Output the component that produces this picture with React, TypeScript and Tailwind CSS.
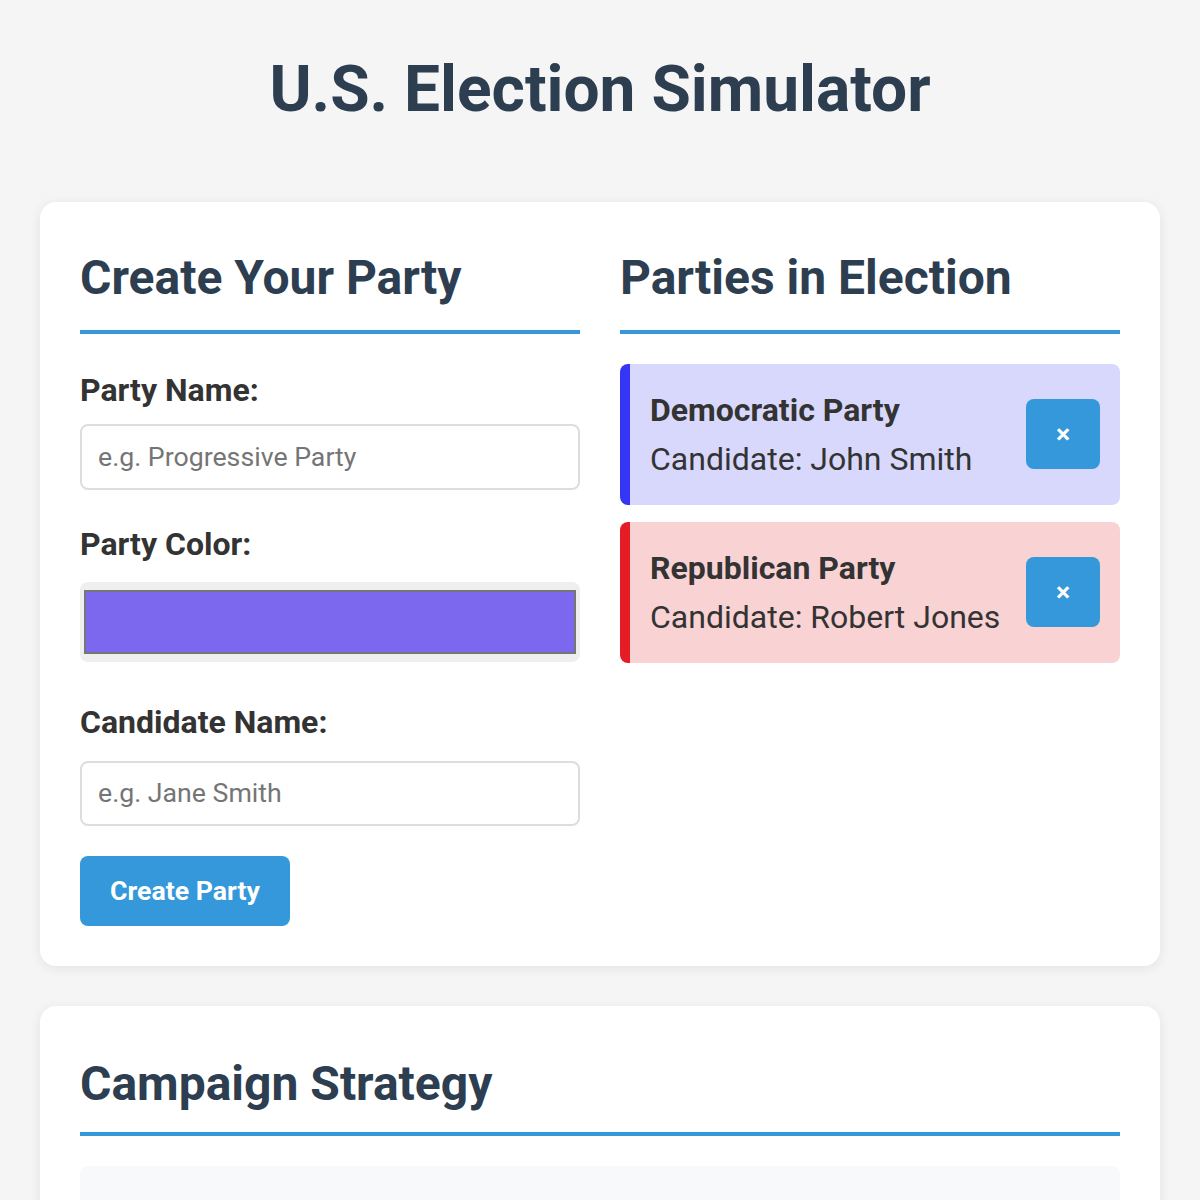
import React from "react";

const parties = [
  { name: "Democratic Party", candidate: "John Smith", bar: "border-[#3535f5]", bg: "bg-[#d8d8fc]" },
  { name: "Republican Party", candidate: "Robert Jones", bar: "border-[#e31c25]", bg: "bg-[#f9d2d4]" },
];

export default function App() {
  return (
    <div
      className="min-h-screen bg-[#f5f5f5] px-10 pt-[52px] pb-10"
      style={{ fontFamily: "Roboto, 'Liberation Sans', sans-serif" }}
    >
      <h1 className="mb-[73px] text-center text-[64px] font-bold leading-[1.2] text-[#2c3e50]">
        U.S. Election Simulator
      </h1>

      <div className="rounded-2xl bg-white p-10 shadow-[0_2px_12px_rgba(0,0,0,0.08)]">
        <div className="grid grid-cols-2 gap-10">
          <div className="flex flex-col items-start">
            <h2 className="mb-8 w-full border-b-4 border-[#3498db] pb-4 text-[48px] font-bold leading-[1.5] text-[#2c3e50]">
              Create Your Party
            </h2>
            <label className="mb-2.5 block text-[32px] font-bold leading-[1.5] text-[#333]">Party Name:</label>
            <input
              type="text"
              placeholder="e.g. Progressive Party"
              className="block h-[66px] w-full rounded-lg border-2 border-[#ddd] bg-white px-4 text-[26.7px] text-[#333] outline-none placeholder:text-[#757575]"
            />
            <label className="mt-[30px] mb-[14px] block text-[32px] font-bold leading-[1.5] text-[#333]">Party Color:</label>
            <div className="h-20 w-full rounded-lg bg-[#efefef] px-1 py-2">
              <div className="h-full w-full border-2 border-[#767676] bg-[#7b68ee]" />
            </div>
            <label className="mt-9 mb-[15px] block text-[32px] font-bold leading-[1.5] text-[#333]">Candidate Name:</label>
            <input
              type="text"
              placeholder="e.g. Jane Smith"
              className="block h-[65px] w-full rounded-lg border-2 border-[#ddd] bg-white px-4 text-[26.7px] text-[#333] outline-none placeholder:text-[#757575]"
            />
            <button className="mt-[30px] h-[70px] rounded-lg bg-[#3498db] px-[30px] text-[26.7px] font-bold text-white">
              Create Party
            </button>
          </div>

          <div>
            <h2 className="mb-[30px] border-b-4 border-[#3498db] pb-4 text-[48px] font-bold leading-[1.5] text-[#2c3e50]">
              Parties in Election
            </h2>
            <div className="flex flex-col gap-[17px]">
              {parties.map((p) => (
                <div
                  key={p.name}
                  className={`flex h-[141px] items-center justify-between rounded-lg border-l-[10px] pl-5 pr-5 ${p.bar} ${p.bg}`}
                >
                  <div>
                    <div className="text-[32px] font-bold leading-[48px] text-[#333]">{p.name}</div>
                    <div className="mt-px text-[32px] leading-[48px] text-[#333]">Candidate: {p.candidate}</div>
                  </div>
                  <button className="flex h-[70px] w-[74px] items-center justify-center rounded-lg bg-[#3498db] text-[26.7px] font-bold text-white">
                    ×
                  </button>
                </div>
              ))}
            </div>
          </div>
        </div>
      </div>

      <div className="mt-10 rounded-2xl bg-white p-10 shadow-[0_2px_12px_rgba(0,0,0,0.08)]">
        <h2 className="mt-[2px] mb-[30px] border-b-4 border-[#3498db] pb-3 text-[48px] font-bold leading-[1.5] text-[#2c3e50]">
          Campaign Strategy
        </h2>
        <div className="h-[300px] rounded-lg bg-[#f8f9fa]" />
      </div>
    </div>
  );
}
